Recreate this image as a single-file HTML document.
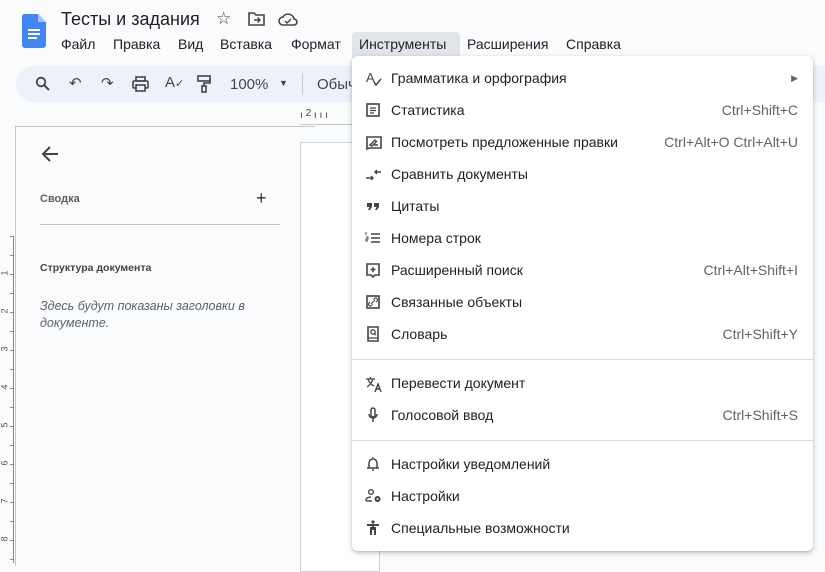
<!DOCTYPE html>
<html><head><meta charset="utf-8"><style>
*{margin:0;padding:0;box-sizing:border-box}
body{width:825px;height:563px;overflow:hidden;background:#f9fbfd;font-family:"Liberation Sans",Arial,sans-serif;position:relative;color:#202124}
.abs{position:absolute}
.title{left:61px;top:9px;font-size:18px;color:#202124}
.menubar{top:36px;left:61px;font-size:14px;color:#202124}
.menubar span{position:absolute;white-space:nowrap}
.pill{left:16px;top:66px;width:840px;height:36px;background:#edf2fa;border-radius:18px}
.tb{font-size:15px;color:#444746}
.panel{left:15px;top:126px;width:300px;height:440px;border-top:1px solid #c4c7c5;border-left:1px solid #c4c7c5;background:#f9fbfd}
.page{left:300px;top:142px;width:80px;height:430px;background:#fff;border:1px solid #d0d3d6}
.menu{left:352px;top:56px;width:461px;height:495px;background:#fff;border-radius:6px;box-shadow:0 2px 6px rgba(60,64,67,.25),0 1px 2px rgba(60,64,67,.2)}
.it{position:absolute;left:0;width:461px;height:32px;font-size:14px;line-height:32px}
.it .t{position:absolute;left:39px;color:#202124}
.it .k{position:absolute;right:15px;color:#5f6368;font-size:14px}
.it svg{position:absolute;left:13px;top:8px}
.sep{position:absolute;left:0;width:461px;height:1px;background:#dadce0}
.rn{position:absolute;left:2px;font-size:9px;color:#555;transform:rotate(-90deg)}
</style></head><body>
<svg class="abs" style="left:22px;top:14px" width="24" height="34" viewBox="0 0 24 34"><path d="M2 0h14l8 8v23a3 3 0 0 1-3 3H3a3 3 0 0 1-3-3V3a3 3 0 0 1 2-3z" fill="#4285f4"/><path d="M16 0v8h8z" fill="#a1c2fa"/><rect x="6" y="15" width="12" height="2" fill="#fff"/><rect x="6" y="19" width="12" height="2" fill="#fff"/><rect x="6" y="23" width="9" height="2" fill="#fff"/></svg>
<div class="abs title">Тесты и задания</div>
<div class="abs" style="left:216px;top:9px;font-size:17px;color:#444">☆</div>
<svg class="abs" style="left:248px;top:12px" width="17" height="14" viewBox="0 0 17 14"><path d="M1 1h5l2 2h8v10H1z" fill="none" stroke="#444" stroke-width="1.6"/><path d="M6 8h6M9.5 5.5 12 8l-2.5 2.5" fill="none" stroke="#444" stroke-width="1.4"/></svg>
<svg class="abs" style="left:278px;top:12px" width="20" height="14" viewBox="0 0 20 14"><path d="M5 13a4 4 0 0 1 0-8 6 6 0 0 1 11 2 3 3 0 0 1 0 6z" fill="none" stroke="#444" stroke-width="1.6"/><path d="M7 9l2 2 4-4" fill="none" stroke="#444" stroke-width="1.4"/></svg>
<div class="abs menubar" style="width:600px;height:20px">
<span style="left:0">Файл</span><span style="left:52px">Правка</span><span style="left:117px">Вид</span><span style="left:159px">Вставка</span><span style="left:230px">Формат</span><span style="left:298px">Инструменты</span><span style="left:406px">Расширения</span><span style="left:505px">Справка</span></div>
<div class="abs" style="left:352px;top:32px;width:108px;height:26px;background:#e1e5ea;border-radius:4px 4px 0 0"></div>
<div class="abs" style="left:359px;top:36px;font-size:14px">Инструменты</div>
<div class="abs pill"></div>
<svg class="abs" style="left:35px;top:76px" width="16" height="16" viewBox="0 0 16 16"><circle cx="6" cy="6" r="4.3" fill="none" stroke="#444" stroke-width="1.8"/><path d="M9 9l5 5" stroke="#444" stroke-width="2"/></svg>
<div class="abs tb" style="left:69px;top:74px">↶</div>
<div class="abs tb" style="left:101px;top:74px">↷</div>
<svg class="abs" style="left:132px;top:76px" width="17" height="16" viewBox="0 0 17 16"><rect x="4" y="1" width="9" height="4" fill="none" stroke="#444" stroke-width="1.6"/><rect x="1" y="5" width="15" height="7" rx="1" fill="none" stroke="#444" stroke-width="1.6"/><rect x="4" y="9" width="9" height="6" fill="#edf2fa" stroke="#444" stroke-width="1.6"/></svg>
<div class="abs tb" style="left:165px;top:74px">A<span style="font-size:11px">✓</span></div>
<svg class="abs" style="left:197px;top:75px" width="14" height="18" viewBox="0 0 14 18"><rect x="1" y="1" width="12" height="5" fill="none" stroke="#444" stroke-width="1.6"/><path d="M13 4v4H7v3" fill="none" stroke="#444" stroke-width="1.6"/><rect x="5" y="11" width="4" height="6" fill="none" stroke="#444" stroke-width="1.6"/></svg>
<div class="abs" style="left:230px;top:76px;font-size:15px;color:#444">100%</div>
<div class="abs" style="left:279px;top:78px;font-size:9px;color:#444">▼</div>
<div class="abs" style="left:302px;top:73px;width:1px;height:22px;background:#c4c7c5"></div>
<div class="abs" style="left:317px;top:76px;font-size:15px;color:#444">Обыч</div>
<div class="abs" style="left:300px;top:110px;font-size:10px;color:#444">ı <span style="position:relative;top:-2px">2</span> ı ı ı</div>
<div class="abs" style="left:300px;top:124px;width:52px;height:1px;background:#c4c7c5"></div>
<div class="abs" style="left:10px;top:236px;width:4px;height:327px;background:repeating-linear-gradient(#888 0 1px,transparent 1px 19px)"></div>
<div class="abs" style="left:13px;top:236px;width:1px;height:327px;background:#888"></div>
<div class="rn" style="top:268px">1</div><div class="rn" style="top:306px">2</div><div class="rn" style="top:344px">3</div><div class="rn" style="top:382px">4</div><div class="rn" style="top:420px">5</div><div class="rn" style="top:458px">6</div><div class="rn" style="top:496px">7</div><div class="rn" style="top:534px">8</div>
<div class="abs panel"></div>
<div class="abs page"></div>
<svg class="abs" style="left:40px;top:145px" width="20" height="18" viewBox="0 0 20 18"><path d="M18 9H3M10 2 3 9l7 7" fill="none" stroke="#444" stroke-width="2"/></svg>
<div class="abs" style="left:40px;top:193px;font-size:11px;color:#444;font-weight:bold;opacity:.85">Сводка</div>
<div class="abs" style="left:256px;top:188px;font-size:18px;color:#333">+</div>
<div class="abs" style="left:40px;top:224px;width:240px;height:1px;background:#c4c7c5"></div>
<div class="abs" style="left:40px;top:262px;font-size:10.5px;color:#444;font-weight:bold">Структура документа</div>
<div class="abs" style="left:40px;top:298px;font-size:12.5px;color:#5f6368;font-style:italic;line-height:17px;width:240px">Здесь будут показаны заголовки в документе.</div>
<div class="abs menu">
<div class="it" style="top:6px"><svg width="18" height="18" viewBox="0 0 18 18"><text x="1" y="12" font-size="13" fill="#444" font-family="Liberation Sans">A</text><path d="M9 12l2 3 5-6" fill="none" stroke="#444" stroke-width="1.5"/></svg><span class="t">Грамматика и орфография</span><span class="k" style="font-size:9px;right:15px">▶</span></div>
<div class="it" style="top:38px"><svg width="16" height="16" viewBox="0 0 16 16"><rect x="2" y="2" width="12" height="12" fill="none" stroke="#444" stroke-width="1.6"/><path d="M5 6h6M5 8.5h6M5 11h4" stroke="#444" stroke-width="1.3"/></svg><span class="t">Статистика</span><span class="k">Ctrl+Shift+C</span></div>
<div class="it" style="top:70px"><svg width="18" height="18" viewBox="0 0 18 18"><path d="M2 15V3h14v11H4z" fill="none" stroke="#444" stroke-width="1.6"/><path d="M5 11l5-5 1.5 1.5L7 12zM9 11h4" stroke="#444" stroke-width="1.4" fill="none"/></svg><span class="t">Посмотреть предложенные правки</span><span class="k">Ctrl+Alt+O Ctrl+Alt+U</span></div>
<div class="it" style="top:102px"><svg width="18" height="18" viewBox="0 0 18 18"><path d="M1 12h7M6 10l2 2-2 2M16 6H10M12 4l-2 2 2 2" fill="none" stroke="#444" stroke-width="1.4"/></svg><span class="t">Сравнить документы</span></div>
<div class="it" style="top:134px"><svg width="16" height="16" viewBox="0 0 16 16"><path d="M2 5h5v4l-2 3H3l1.5-3H2zM9 5h5v4l-2 3h-2l1.5-3H9z" fill="#444"/></svg><span class="t">Цитаты</span></div>
<div class="it" style="top:166px"><svg width="16" height="16" viewBox="0 0 16 16"><path d="M6 4h9M6 8h9M6 12h9" stroke="#444" stroke-width="1.5"/><path d="M1 2v3M1 7h2v2H1v2h2" stroke="#444" stroke-width="1" fill="none"/></svg><span class="t">Номера строк</span></div>
<div class="it" style="top:198px"><svg width="16" height="18" viewBox="0 0 16 18"><path d="M2 2h12v11H10l-2 2-2-2H2z" fill="none" stroke="#444" stroke-width="1.6"/><path d="M8 5v5M5.5 7.5h5" stroke="#444" stroke-width="1.5"/></svg><span class="t">Расширенный поиск</span><span class="k">Ctrl+Alt+Shift+I</span></div>
<div class="it" style="top:230px"><svg width="16" height="16" viewBox="0 0 16 16"><rect x="2" y="2" width="12" height="12" fill="none" stroke="#444" stroke-width="1.6"/><path d="M6 10l4-4M5 8l-1 1a1.5 1.5 0 0 0 2.5 2.5l1-1M11 8l1-1a1.5 1.5 0 0 0-2.5-2.5l-1 1" fill="none" stroke="#444" stroke-width="1.1"/></svg><span class="t">Связанные объекты</span></div>
<div class="it" style="top:262px"><svg width="16" height="16" viewBox="0 0 16 16"><path d="M3 1h10v14H3z" fill="none" stroke="#444" stroke-width="1.6"/><circle cx="8" cy="6" r="2.2" fill="none" stroke="#444" stroke-width="1.3"/><path d="M9.5 7.5 11 9M3 12h10" stroke="#444" stroke-width="1.3"/></svg><span class="t">Словарь</span><span class="k">Ctrl+Shift+Y</span></div>
<div class="sep" style="top:303px"></div>
<div class="it" style="top:311px"><svg width="18" height="18" viewBox="0 0 18 18"><path d="M1 4h9M5.5 2v2M3 4c1 4 4 6 6 7M8 4c-1 3-3 6-6 8" fill="none" stroke="#444" stroke-width="1.3"/><path d="M10 17l3-8 3 8M11 14h4" fill="none" stroke="#444" stroke-width="1.4"/></svg><span class="t">Перевести документ</span></div>
<div class="it" style="top:343px"><svg width="16" height="16" viewBox="0 0 16 16"><rect x="6" y="1" width="4" height="9" rx="2" fill="none" stroke="#444" stroke-width="1.5"/><path d="M4 7a4 4 0 0 0 8 0M8 11v4" fill="none" stroke="#444" stroke-width="1.5"/></svg><span class="t">Голосовой ввод</span><span class="k">Ctrl+Shift+S</span></div>
<div class="sep" style="top:384px"></div>
<div class="it" style="top:392px"><svg width="16" height="16" viewBox="0 0 16 16"><path d="M4 12V7a4 4 0 0 1 8 0v5M2 12h12M8 2V1M7 14h2" fill="none" stroke="#444" stroke-width="1.5"/></svg><span class="t">Настройки уведомлений</span></div>
<div class="it" style="top:424px"><svg width="18" height="16" viewBox="0 0 18 16"><circle cx="6" cy="4" r="2.3" fill="none" stroke="#444" stroke-width="1.4"/><path d="M1 13v-1c0-2 3-3 5-3" fill="none" stroke="#444" stroke-width="1.4"/><path d="M1 13h6" stroke="#444" stroke-width="1.4"/><circle cx="12.5" cy="11" r="3" fill="#444"/><circle cx="12.5" cy="11" r="1" fill="#fff"/></svg><span class="t">Настройки</span></div>
<div class="it" style="top:456px"><svg width="16" height="16" viewBox="0 0 16 16"><circle cx="8" cy="2" r="1.6" fill="#444"/><path d="M2 5h12M8 5v5M6 7v8M10 7v8" stroke="#444" stroke-width="2"/></svg><span class="t">Специальные возможности</span></div>
</div>
</body></html>
